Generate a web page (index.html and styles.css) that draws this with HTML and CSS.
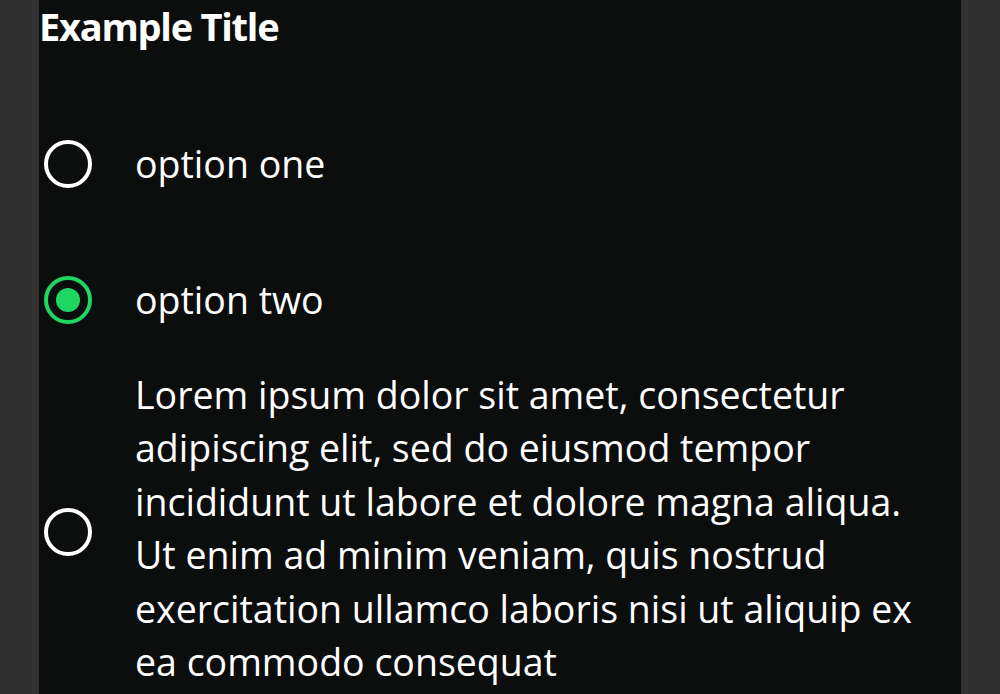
FILE: index.html
```html
<!DOCTYPE html>
<html lang="en">
<head>
<meta charset="utf-8">
<title>Example Title</title>
<link rel="stylesheet" href="styles.css">
</head>
<body>
<main class="panel">
  <h1 class="title">Example Title</h1>
  <div class="options" role="radiogroup">
    <div class="option" role="radio" aria-checked="false">
      <span class="radio"></span>
      <span class="label">option one</span>
    </div>
    <div class="option" role="radio" aria-checked="true">
      <span class="radio radio--checked"><span class="dot"></span></span>
      <span class="label">option two</span>
    </div>
    <div class="option option--long" role="radio" aria-checked="false">
      <span class="radio"></span>
      <span class="label">Lorem ipsum dolor sit amet, consectetur adipiscing elit, sed do eiusmod tempor incididunt ut labore et dolore magna aliqua. Ut enim ad minim veniam, quis nostrud exercitation ullamco laboris nisi ut aliquip ex ea commodo consequat</span>
    </div>
  </div>
</main>
</body>
</html>
```

FILE: styles.css
```css
html, body {
  margin: 0;
  padding: 0;
}
body {
  background: #313131;
  font-family: "Open Sans", "Noto Sans", sans-serif;
  font-variant-ligatures: none;
  color: #ffffff;
}
.panel {
  width: 922px;
  min-height: 694px;
  margin: 0 auto;
  background: #0c0d0d;
  box-sizing: border-box;
  padding-right: 28px;
  overflow: hidden;
}
.title {
  margin: 0 0 44px 0;
  font-size: 38px;
  line-height: 52px;
  font-weight: 700;
  letter-spacing: -1.25px;
}
.options {
  display: flex;
  flex-direction: column;
}
.option {
  display: flex;
  align-items: center;
  min-height: 136px;
  padding-left: 5px;
  gap: 43px;
}
.radio {
  flex: none;
  width: 48px;
  height: 48px;
  box-sizing: border-box;
  border: 4.5px solid #ffffff;
  border-radius: 50%;
  display: flex;
  align-items: center;
  justify-content: center;
}
.option--long .radio {
  margin-top: 8px;
}
.radio--checked {
  border-color: #1ed760;
}
.dot {
  width: 24px;
  height: 24px;
  border-radius: 50%;
  background: #1ed760;
}
.label {
  flex: 1;
  font-size: 37.5px;
  line-height: 53.4px;
}
```
